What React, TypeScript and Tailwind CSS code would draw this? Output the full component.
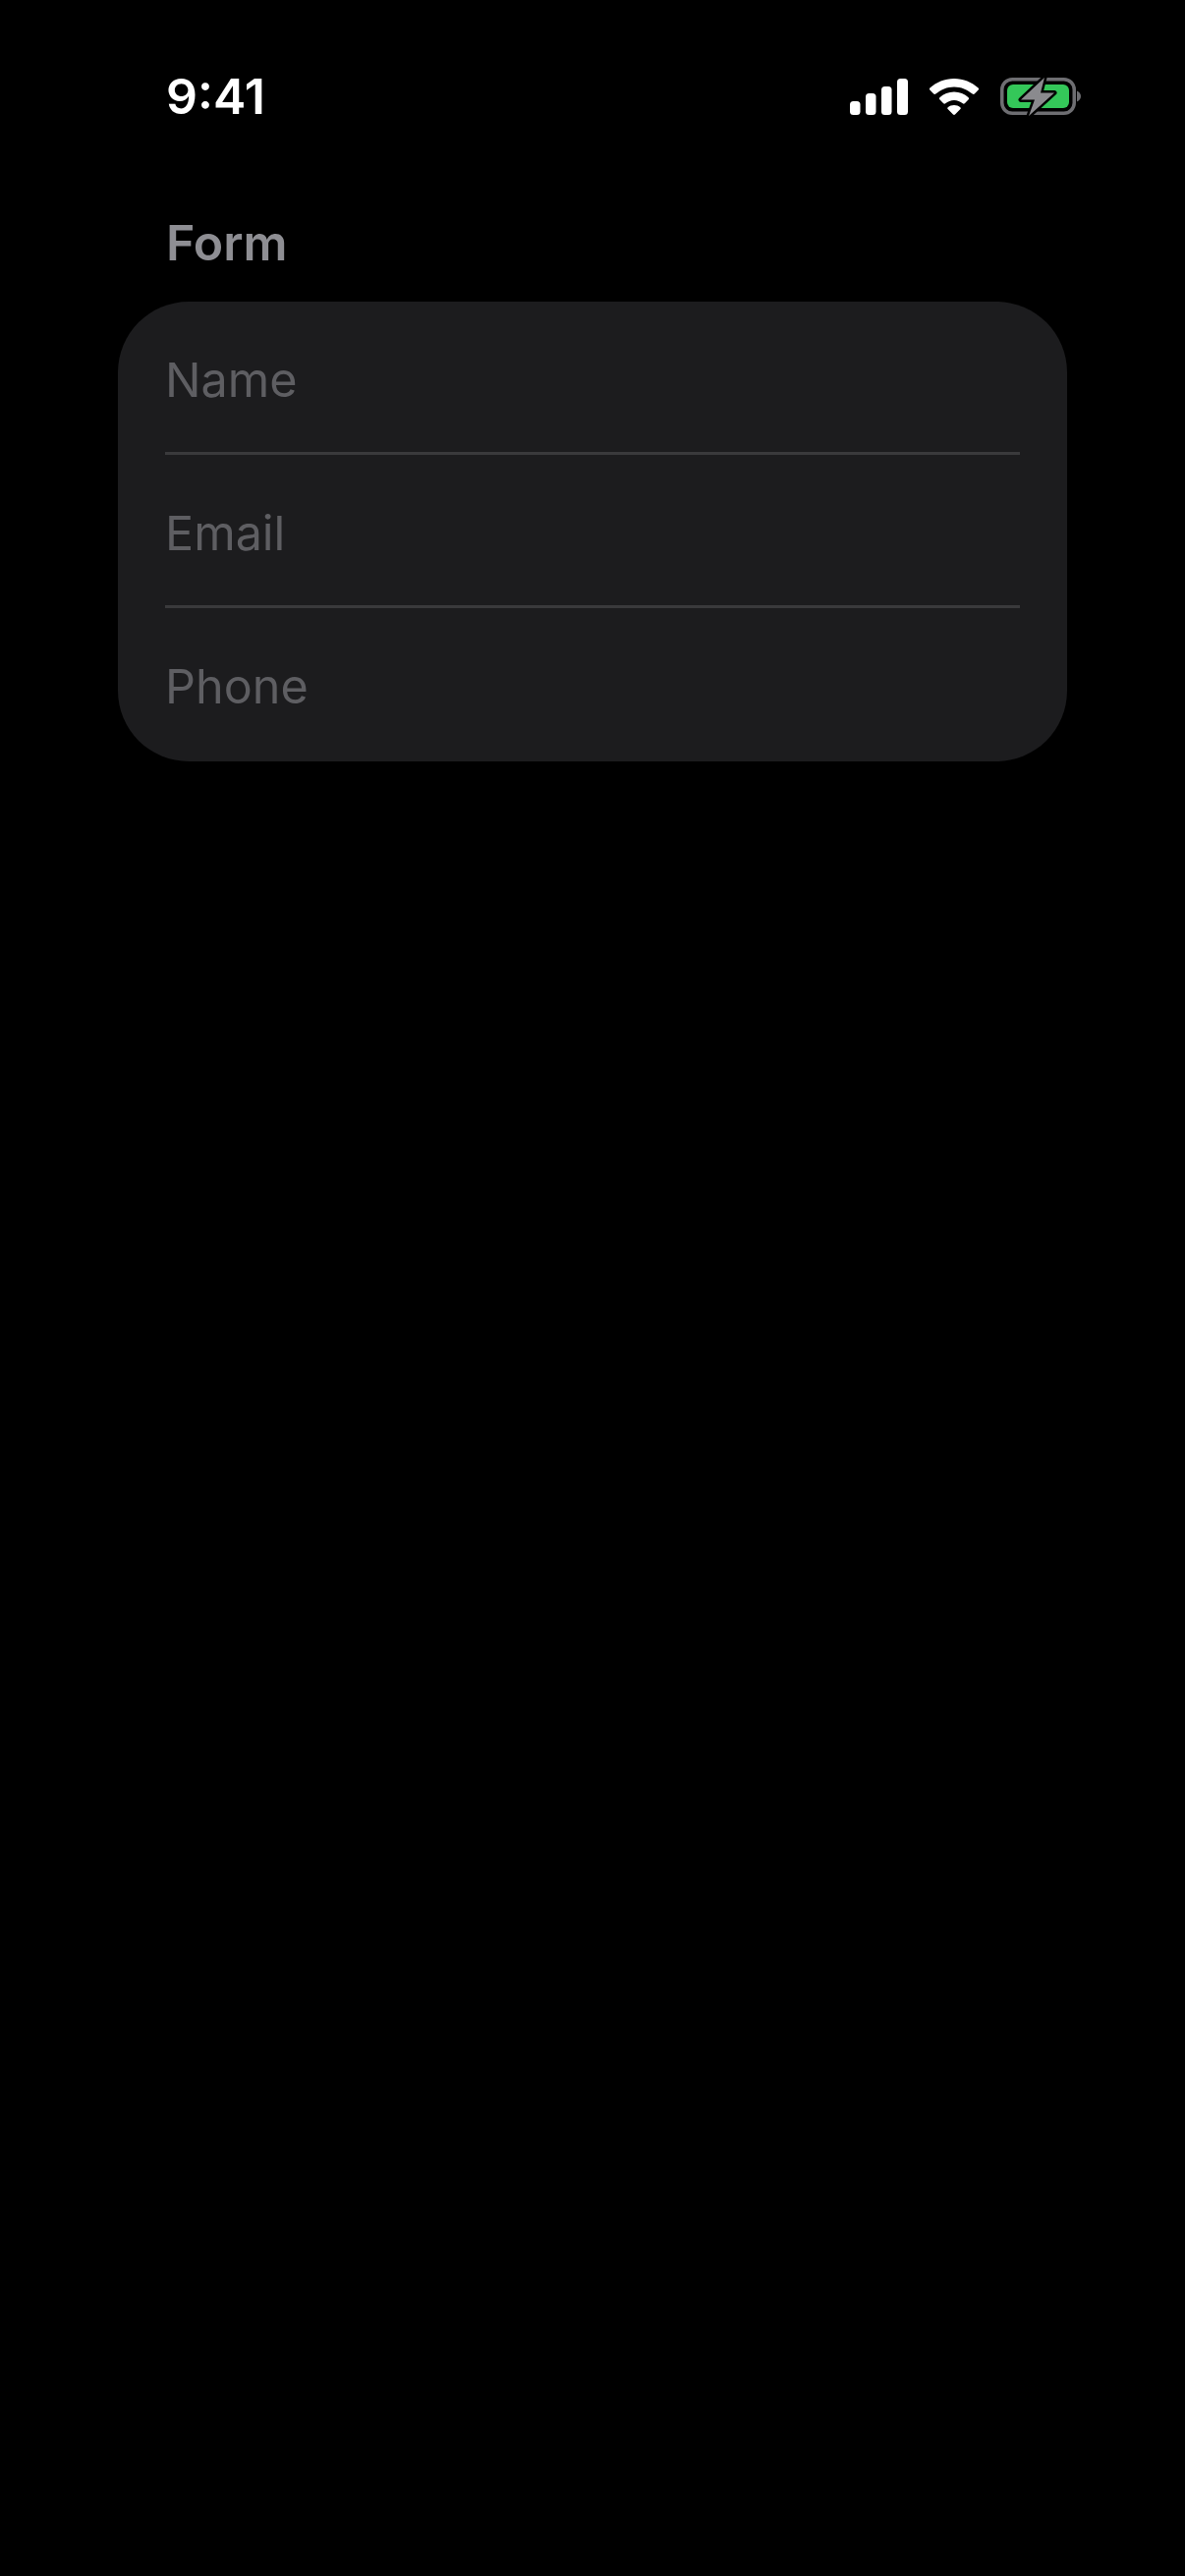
// App.tsx
const fields = ['Name', 'Email', 'Phone'];

function Signal() {
  return (
    <svg width="59" height="37" viewBox="0 0 59 37" fill="#fff">
      <rect x="0" y="23" width="10.5" height="14" rx="3.5" />
      <rect x="16" y="15" width="10.5" height="22" rx="3.5" />
      <rect x="32" y="8" width="10.5" height="29" rx="3.5" />
      <rect x="48" y="0" width="11" height="37" rx="3.5" />
    </svg>
  );
}

function Wifi() {
  return (
    <svg width="50" height="37" viewBox="0 0 50 37" fill="#fff">
      <path d="M25 0C34.5 0 43 3.6 49.6 9.6C50.2 10.2 50.2 11 49.7 11.6L45.8 15.6C45.2 16.2 44.3 16.2 43.7 15.6C38.6 11.2 32.1 8.4 25 8.4C17.9 8.4 11.4 11.2 6.3 15.6C5.7 16.2 4.8 16.2 4.2 15.6L0.3 11.6C-0.2 11 -0.2 10.2 0.4 9.6C7 3.6 15.5 0 25 0Z" />
      <path d="M25 13.6C30.6 13.6 35.7 15.7 39.6 19.2C40.2 19.8 40.2 20.6 39.7 21.2L35.8 25.2C35.2 25.8 34.4 25.8 33.8 25.3C31.3 23.3 28.3 22 25 22C21.7 22 18.7 23.3 16.2 25.3C15.6 25.8 14.8 25.8 14.2 25.2L10.3 21.2C9.8 20.6 9.8 19.8 10.4 19.2C14.3 15.7 19.4 13.6 25 13.6Z" />
      <path d="M25 27C27.4 27 29.6 27.8 31.3 29.2C31.9 29.7 31.9 30.5 31.4 31L26 36.5C25.4 37.1 24.6 37.1 24 36.5L18.6 31C18.1 30.5 18.1 29.7 18.7 29.2C20.4 27.8 22.6 27 25 27Z" />
    </svg>
  );
}

function Battery() {
  return (
    <svg width="82" height="41" viewBox="0 0 82 41">
      <rect x="1.75" y="2.75" width="73.5" height="34.5" rx="10.5" fill="none" stroke="#6e6e72" strokeWidth="3.5" />
      <rect x="7" y="8" width="63" height="24" rx="6" fill="#34c759" />
      <path d="M78 14.5C80.5 15.5 82 17.6 82 20C82 22.4 80.5 24.5 78 25.5Z" fill="#6e6e72" />
      <path
        d="M45 1L21 23.5H35L29 40L55 16.5H41Z"
        fill="#8a8a8e"
        stroke="#000"
        strokeWidth="5"
        strokeLinejoin="round"
        paintOrder="stroke"
      />
    </svg>
  );
}

export default function App() {
  return (
    <div className="min-h-[2622px] bg-black font-['Inter',sans-serif] px-[120px]">
      <div className="flex items-center justify-between pl-[49px] pt-[74px] -mr-[14px]">
        <span className="text-[50px] leading-[48px] font-semibold text-white">9:41</span>
        <div className="flex items-center gap-[22px]">
          <Signal />
          <Wifi />
          <Battery />
        </div>
      </div>
      <h1 className="mt-[95px] pl-[49px] text-[50px] leading-[60px] font-semibold text-[#8e8e93]">Form</h1>
      <div className="mt-[30px] w-[966px] rounded-[72px] bg-[#1c1c1e] px-[48px]">
        {fields.map((f, i) => (
          <div
            key={f}
            className={`flex h-[156px] items-center pt-[4px] text-[48.5px] text-[#5e5e62] ${i < 2 ? 'shadow-[inset_0_-3px_0_#3a3a3c]' : ''}`}
          >
            {f}
          </div>
        ))}
      </div>
    </div>
  );
}
